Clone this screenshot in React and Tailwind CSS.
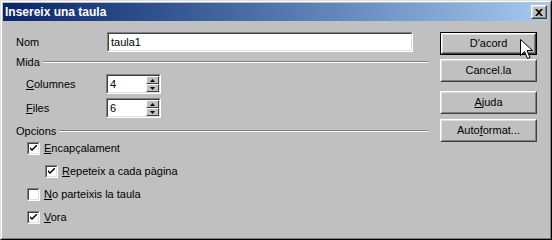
import React from 'react';

const raised = 'border border-t-white border-l-white border-r-[#404040] border-b-[#404040]';
const raisedInner = 'border border-t-[#dfdfdf] border-l-[#dfdfdf] border-r-[#808080] border-b-[#808080]';
const sunken = 'border border-t-[#808080] border-l-[#808080] border-r-white border-b-white';
const sunkenInner = 'border border-t-[#404040] border-l-[#404040] border-r-[#dfdfdf] border-b-[#dfdfdf]';

const Mn = ({ children }) => <span className="underline underline-offset-[1px]">{children}</span>;

const Button = ({ children, isDefault, className = '' }) => {
  const inner = (
    <div className={`${raised} h-full`}>
      <div className={`${raisedInner} h-full flex items-center justify-center`}>{children}</div>
    </div>
  );
  if (isDefault) {
    return <div className={`border border-black h-[23px] ${className}`}>{inner}</div>;
  }
  return <div className={`h-[23px] ${className}`}>{inner}</div>;
};

const Field = ({ value, className = '' }) => (
  <div className={`${sunken} ${className}`}>
    <div className={`${sunkenInner} h-full bg-white flex items-center pl-[2px]`}>{value}</div>
  </div>
);

const Spin = ({ value }) => (
  <div className={`${sunken} w-[55px] h-[20px]`}>
    <div className={`${sunkenInner} h-full bg-white flex`}>
      <div className="flex-1 flex items-center pl-[2px]">{value}</div>
      <div className="w-[13px] flex flex-col">
        {['up', 'down'].map(dir => (
          <div key={dir} className={`${raised} h-[8px] bg-[#c0c0c0]`}>
            <div className="h-full flex items-center justify-center">
              <svg width="5" height="3" viewBox="0 0 5 3">
                {dir === 'up'
                  ? <polygon points="2.5,0 5,3 0,3" fill="#000" />
                  : <polygon points="0,0 5,0 2.5,3" fill="#000" />}
              </svg>
            </div>
          </div>
        ))}
      </div>
    </div>
  </div>
);

const Check = ({ checked, label, indent }) => (
  <div className={`flex items-center h-[13px] ${indent ? 'pl-[29px]' : 'pl-[11px]'}`}>
    <div className={`${sunken} w-[13px] h-[13px]`}>
      <div className={`${sunkenInner} h-full bg-white flex items-center justify-center`}>
        {checked && (
          <svg width="7" height="7" viewBox="0 0 7 7">
            <path d="M0 2 L0 4 L2 6 L7 1 L7 -1 L2 4 Z" fill="#000" />
          </svg>
        )}
      </div>
    </div>
    <span className="ml-[4px]">{label}</span>
  </div>
);

const Group = ({ title, className = '' }) => (
  <div className={`flex items-center h-[14px] ${className}`}>
    <span>{title}</span>
    <div className="flex-1 ml-[3px] border-t border-t-[#808080] border-b border-b-white" />
  </div>
);

const App = () => {
  return (
    <div
      className="w-[552px] h-[240px] bg-[#c0c0c0] text-[11px] text-black relative border border-t-[#dfdfdf] border-l-[#dfdfdf] border-r-[#000] border-b-[#000]"
      style={{ fontFamily: '"Liberation Sans", Arial, sans-serif' }}
    >
      <div className="h-full border border-t-white border-l-white border-r-[#808080] border-b-[#808080] p-px">
        <div className="h-[18px] flex items-center justify-between pl-[2px] pr-[2px] bg-gradient-to-r from-[#0a246a] to-[#a6caf0]">
          <span className="text-white font-bold text-[12px]">Insereix una taula</span>
          <div className={`${raised} w-[16px] h-[14px] bg-[#c0c0c0]`}>
            <div className={`${raisedInner} h-full flex items-center justify-center`}>
              <svg width="8" height="7" viewBox="0 0 8 7">
                <path d="M0 0h2l2 2 2-2h2L5 3.5 8 7H6L4 5 2 7H0l3-3.5Z" fill="#000" />
              </svg>
            </div>
          </div>
        </div>

        <div className="flex pt-[11px] pl-[13px]">
          <div className="w-[412px] flex flex-col">
            <div className="flex items-center h-[20px]">
              <span className="w-[91px]">Nom</span>
              <Field value="taula1" className="w-[306px] h-[20px]" />
            </div>

            <Group title="Mida" className="mt-[3px]" />

            <div className="flex items-center h-[20px] mt-[5px]">
              <span className="w-[90px] pl-[10px]"><Mn>C</Mn>olumnes</span>
              <Spin value="4" />
            </div>
            <div className="flex items-center h-[20px] mt-[4px]">
              <span className="w-[90px] pl-[10px]"><Mn>F</Mn>iles</span>
              <Spin value="6" />
            </div>

            <Group title="Opcions" className="mt-[6px]" />

            <div className="flex flex-col gap-[10px] mt-[4px]">
              <Check checked label={<><Mn>E</Mn>ncapçalament</>} />
              <Check checked indent label={<><Mn>R</Mn>epeteix a cada pàgina</>} />
              <Check label={<><Mn>N</Mn>o parteixis la taula</>} />
              <Check checked label={<><Mn>V</Mn>ora</>} />
            </div>
          </div>

          <div className="w-[97px] ml-[12px] flex flex-col">
            <Button isDefault>D'acord</Button>
            <Button className="mt-[4px]">Cancel.la</Button>
            <Button className="mt-[9px]"><span><Mn>A</Mn>juda</span></Button>
            <Button className="mt-[5px]"><span>Auto<Mn>f</Mn>ormat...</span></Button>
          </div>
        </div>
      </div>

      <svg className="absolute left-[519px] top-[38px]" width="13" height="21" viewBox="0 0 13 21">
        <path
          d="M0.5 0.5 L0.5 16.5 L4.5 12.5 L7.5 19.5 L10 18.5 L7 11.5 L12.5 11.5 Z"
          fill="#fff"
          stroke="#000"
          strokeWidth="1"
          strokeLinejoin="miter"
        />
      </svg>
    </div>
  );
};

export default App;
